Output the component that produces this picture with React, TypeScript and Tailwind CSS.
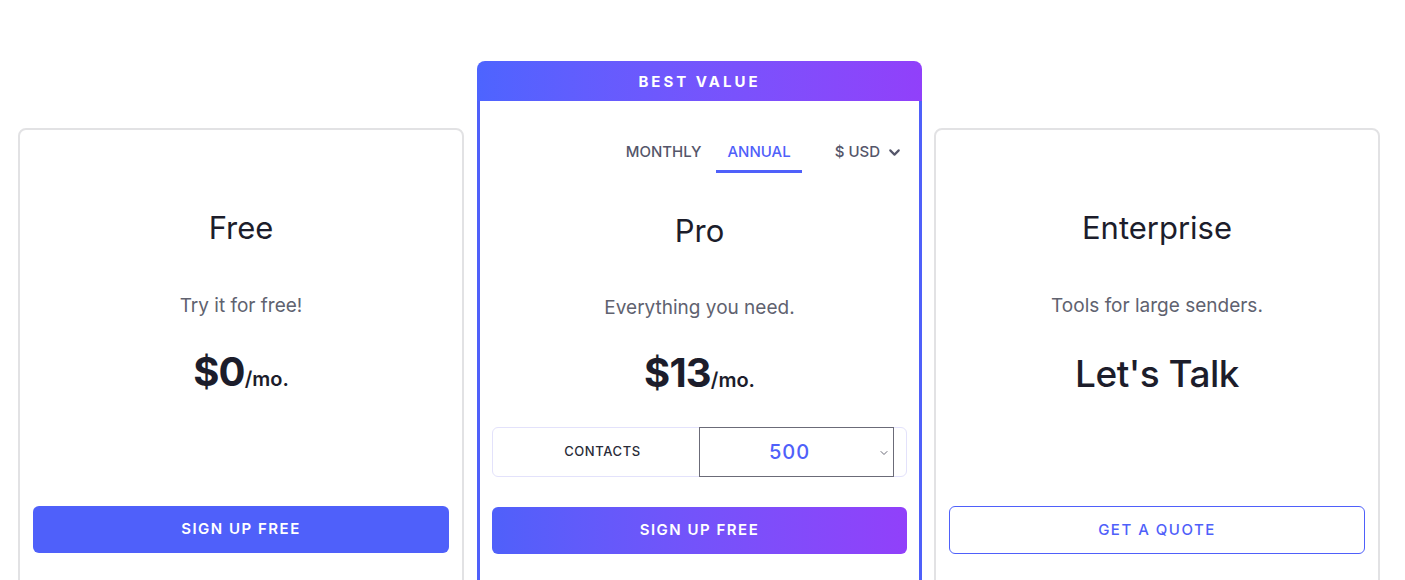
import { ChevronDown } from "lucide-react";

const titleCls = "h-[36px] flex items-center justify-center text-[31px] font-normal text-[#1c1d2b]";
const descCls = "h-[28px] flex items-center justify-center text-[19px] text-[#60626f]";

function Price({ amount }: { amount: string }) {
	return (
		<div className="h-[48px] flex items-baseline justify-center text-[#1c1d2b]">
			<span className="text-[40px] font-bold leading-[48px] tracking-[-0.8px]">{amount}</span>
			<span className="text-[20px] font-semibold">/mo.</span>
		</div>
	);
}

function FreeCard() {
	return (
		<div className="mt-[67px] w-[446px] h-[470px] shrink-0 rounded-lg border-2 border-[#e2e2e4] bg-white px-[13px] pt-[80px] flex flex-col">
			<div className={titleCls}>Free</div>
			<div className={`${descCls} mt-[46px]`}>Try it for free!</div>
			<div className="mt-[28px]">
				<Price amount="$0" />
			</div>
			<button className="mt-[110px] h-[47px] w-full rounded-md bg-[#4f60fa] text-white text-[15px] font-semibold tracking-[1.5px]">
				SIGN UP FREE
			</button>
		</div>
	);
}

function ProCard() {
	return (
		<div className="ml-[13px] w-[445px] h-[520px] shrink-0 flex flex-col">
			<div className="h-[40px] pt-[3px] rounded-t-lg bg-gradient-to-r from-[#4d64ff] to-[#9140fa] flex items-center justify-center text-white text-[15px] font-bold tracking-[3px]">
				BEST VALUE
			</div>
			<div className="flex-1 border-x-[3px] border-[#4f60fa] bg-white px-[12px] pt-[30px] flex flex-col">
				<div className="flex items-start justify-end pr-[4px] text-[15px] font-medium">
					<div className="h-[42px] pt-[3px] px-[11px] flex items-center text-[#55566a] border-b-[3px] border-transparent">MONTHLY</div>
					<div className="ml-[4px] h-[42px] pt-[3px] px-[11px] flex items-center text-[#4f60fa] border-b-[3px] border-[#4f60fa]">ANNUAL</div>
					<div className="ml-[33px] h-[42px] pt-[3px] flex items-center gap-[6px] text-[#55566a] border-b-[3px] border-transparent">
						<span>$ USD</span>
						<ChevronDown size={17} strokeWidth={3} className="text-[#55566a]" />
					</div>
				</div>
				<div className={`${titleCls} mt-[40px]`}>Pro</div>
				<div className={`${descCls} mt-[45px]`}>Everything you need.</div>
				<div className="mt-[27px]">
					<Price amount="$13" />
				</div>
				<div className="mt-[30px] h-[50px] rounded-md border border-[#e3e2fb] flex items-stretch pr-[12px]">
					<div className="w-[206px] pl-[13px] flex items-center justify-center text-[13px] font-medium tracking-[0.6px] text-[#2a2b38]">
						CONTACTS
					</div>
					<div className="flex-1 -my-px border border-[#6b6b78] pr-[14px] flex items-center justify-center relative">
						<span className="text-[20px] font-medium tracking-[1px] text-[#4f60fa]">500</span>
						<ChevronDown size={12} strokeWidth={2} className="absolute right-[3px] top-[19px] text-[#6b6b78]" />
					</div>
				</div>
				<button className="mt-[30px] h-[47px] w-full rounded-md bg-gradient-to-r from-[#4f60fa] to-[#9140fa] text-white text-[15px] font-semibold tracking-[1.5px]">
					SIGN UP FREE
				</button>
			</div>
		</div>
	);
}

function EnterpriseCard() {
	return (
		<div className="ml-[12px] mt-[67px] w-[446px] h-[470px] shrink-0 rounded-lg border-2 border-[#e2e2e4] bg-white px-[13px] pt-[80px] flex flex-col">
			<div className={titleCls}>Enterprise</div>
			<div className={`${descCls} mt-[46px]`}>Tools for large senders.</div>
			<div className="mt-[30px] h-[48px] flex items-center justify-center text-[37px] font-medium tracking-[-0.5px] text-[#1c1d2b]">
				Let's Talk
			</div>
			<button className="mt-[108px] h-[48px] w-full rounded-md border border-[#4f60fa] bg-white text-[#4f60fa] text-[15px] font-medium tracking-[1.5px]">
				GET A QUOTE
			</button>
		</div>
	);
}

export default function App() {
	return (
		<div className="h-[580px] w-[1405px] overflow-hidden bg-white font-['Inter',sans-serif]">
			<div className="flex items-start pl-[18px] pt-[61px]">
				<FreeCard />
				<ProCard />
				<EnterpriseCard />
			</div>
		</div>
	);
}
